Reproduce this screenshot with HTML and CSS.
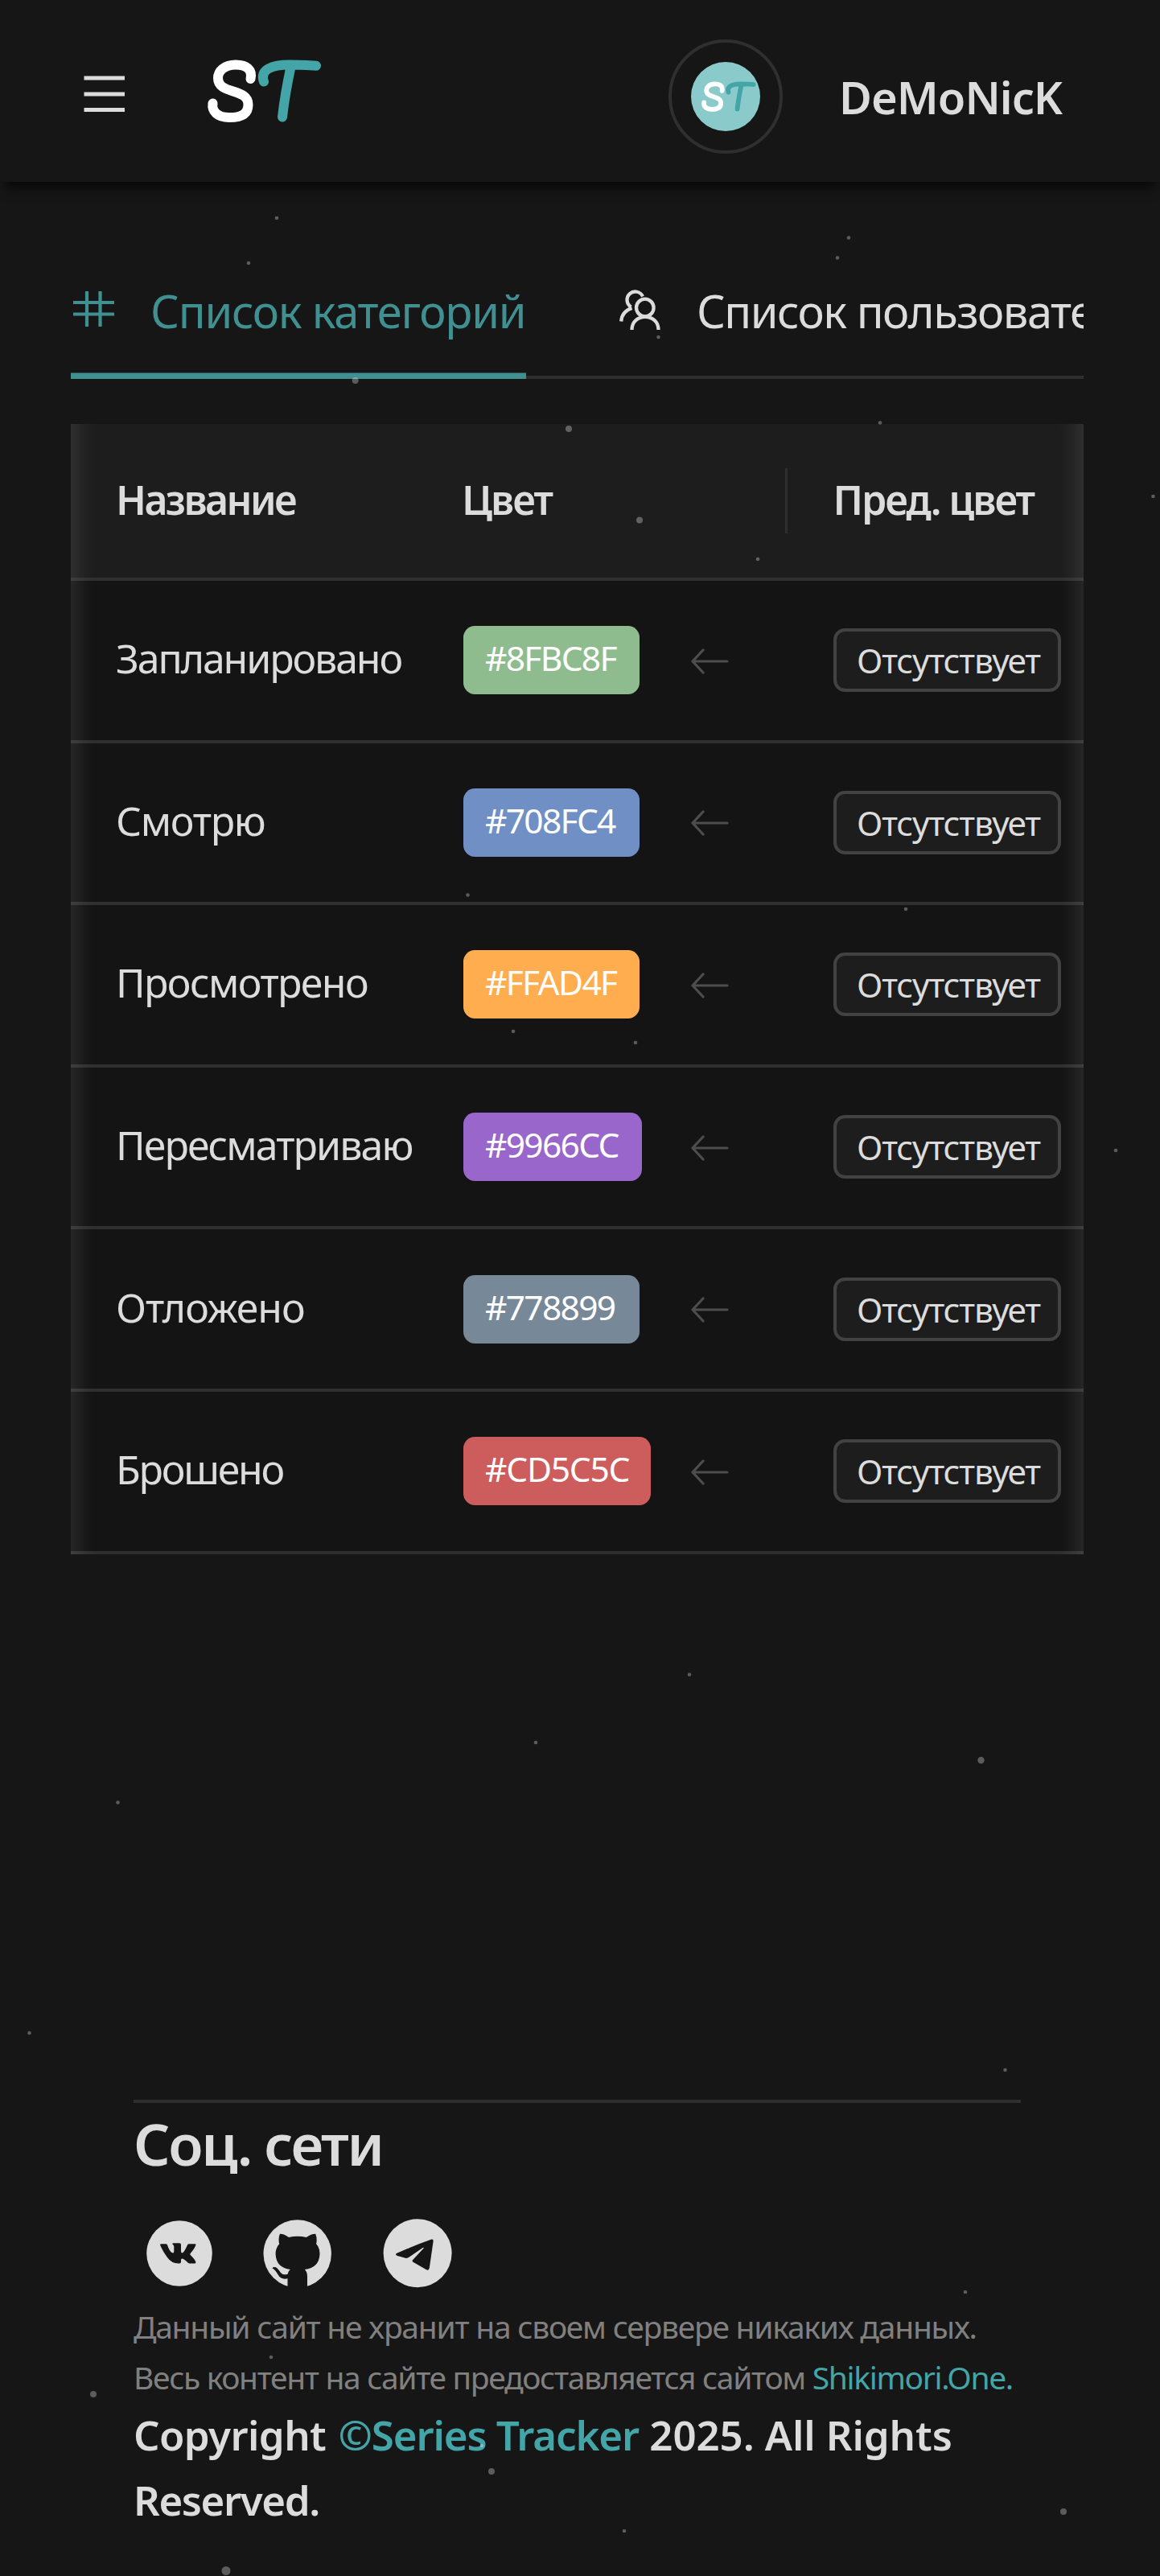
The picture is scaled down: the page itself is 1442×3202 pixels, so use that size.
FILE: index.html
```
<!DOCTYPE html>
<html lang="ru">
<head>
<meta charset="utf-8">
<title>Series Tracker</title>
<link rel="stylesheet" href="styles.css">
</head>
<body>
<svg class="defs" width="0" height="0" aria-hidden="true">
  <symbol id="logo" viewBox="256 72 146 84">
    <g fill="none" stroke-width="12" stroke-linecap="round" stroke-linejoin="round">
      <path stroke="#fff" d="M311.5 98C314 87 307 80.500 293 80.500C278 80.500 271 89 271 97C271 118 308.500 109 308.500 130C308.500 141 301 146 285 146C270 146 263 138 264.500 128.500"/>
      <path stroke="#43a5a7" d="M328 101.500C322 86 339 80.500 360 80.500C372 80.500 380 81 393 81.700M361.500 83Q354 118 351 145.500"/>
    </g>
  </symbol>
  <symbol id="arrow" viewBox="0 0 48 32">
    <path d="M46 16H3M16 2L3 16L16 30" fill="none" stroke="currentColor" stroke-width="3.200" stroke-linecap="round" stroke-linejoin="round"/>
  </symbol>
</svg>

<header class="header">
  <div class="brand">
    <svg class="burger" viewBox="0 0 52 46"><path d="M.5 3H51M.5 23H51M.5 42.500H51" stroke="#dcdcdc" stroke-width="5.200"/></svg>
    <svg class="logo"><use href="#logo"/></svg>
  </div>
  <div class="user">
    <div class="avatar"><div class="avatar-pic"><svg class="avatar-logo"><use href="#logo"/></svg></div></div>
    <span class="user-name">DeMoNicK</span>
  </div>
</header>

<main class="main">
  <nav class="tabs">
    <div class="tab tab-active">
      <svg class="tab-icon" viewBox="0 0 56 56"><path d="M3 18H54M3 32.500H54M20 4V48M36.500 4V48" stroke="currentColor" stroke-width="4.200"/></svg>
      <span>Список категорий</span>
    </div>
    <div class="tab tab-next">
      <svg class="tab-icon" viewBox="0 0 56 56" fill="none" stroke="currentColor" stroke-width="4.300">
        <circle cx="32.800" cy="24.500" r="10.800"/>
        <path d="M30 10.500A10.200 10.200 0 1 0 15.500 23.500M3.200 41.500Q4 29 16.500 25M16.500 52C16.500 30.500 49.500 30.500 49.500 52"/>
      </svg>
      <span>Список пользователей</span>
    </div>
  </nav>

  <section class="table">
    <div class="row head">
      <div class="cell">Название</div>
      <div class="cell split">Цвет</div>
      <div class="cell">Пред. цвет</div>
    </div>
    <div class="row">
      <div class="cell name">Запланировано</div>
      <div class="cell color"><span class="tag green">#8FBC8F</span><svg class="arrow"><use href="#arrow"/></svg></div>
      <div class="cell"><span class="none">Отсутствует</span></div>
    </div>
    <div class="row">
      <div class="cell name">Смотрю</div>
      <div class="cell color"><span class="tag blue">#708FC4</span><svg class="arrow"><use href="#arrow"/></svg></div>
      <div class="cell"><span class="none">Отсутствует</span></div>
    </div>
    <div class="row">
      <div class="cell name">Просмотрено</div>
      <div class="cell color"><span class="tag orange">#FFAD4F</span><svg class="arrow"><use href="#arrow"/></svg></div>
      <div class="cell"><span class="none">Отсутствует</span></div>
    </div>
    <div class="row">
      <div class="cell name">Пересматриваю</div>
      <div class="cell color"><span class="tag violet">#9966CC</span><svg class="arrow"><use href="#arrow"/></svg></div>
      <div class="cell"><span class="none">Отсутствует</span></div>
    </div>
    <div class="row">
      <div class="cell name">Отложено</div>
      <div class="cell color"><span class="tag slate">#778899</span><svg class="arrow"><use href="#arrow"/></svg></div>
      <div class="cell"><span class="none">Отсутствует</span></div>
    </div>
    <div class="row">
      <div class="cell name">Брошено</div>
      <div class="cell color"><span class="tag red">#CD5C5C</span><svg class="arrow"><use href="#arrow"/></svg></div>
      <div class="cell"><span class="none">Отсутствует</span></div>
    </div>
  </section>
</main>

<footer class="footer">
  <h2 class="social-title">Соц. сети</h2>
  <div class="social">
    <svg width="82" height="86" viewBox="0 -1.500 82 86"><circle cx="41" cy="41.500" r="40.800" fill="#dcdcdc"/><path fill="#161616" d="M17 30.800Q17 29.800 18.500 29.800H24Q25.500 29.800 26 31Q29.500 41 33 41Q34.300 41 34.300 38.800V33Q34.300 31.500 32.500 30.200Q31.800 28.800 33.500 28.800H41.200Q43 28.800 43 30.800V38.500Q43 41 44.500 41Q46.500 41 51 31Q51.500 29.800 53 29.800H60.500Q62 29.800 61.200 31.500Q60 35.500 54.700 41.500Q54 42.500 54.700 43.500Q60 48.500 61.200 52Q61.800 54 60 54H54Q52.500 54 51.500 53Q46.500 48 44.300 48Q43 48 43 49.500V52Q43 54 41 54Q31.500 54.500 26 46.500Q20 38.500 17 30.800Z"/></svg>
    <svg width="86" height="86" viewBox="0 0 86 86"><circle cx="42.700" cy="43.500" r="42.200" fill="#dcdcdc"/><path fill="#161616" d="M20.200 31.300Q18.500 25 20.900 18.700Q26 18.500 32 23Q42.700 20.500 53.800 23Q60 18.500 65.300 18.700Q67.500 25 66.100 31.300Q70.700 36 70.500 44Q69.500 61 51.900 63Q55 66 55 72V86H30.500V74.300Q22 76 18.500 69.300Q15 63 11.500 61.500Q12.500 59.500 15.600 60.300Q18.500 61.500 21.500 66.500Q24.500 70.500 30.500 68.700Q31 65 33.900 63Q16.500 61 15.600 44Q15.500 36 20.200 31.300Z"/></svg>
    <svg width="86" height="86" viewBox="0 0 86 86"><circle cx="43.100" cy="42.700" r="42.500" fill="#dcdcdc"/><path fill="#161616" d="M17.300 42.800Q38 33.500 60.500 25.600Q62.800 25 62.600 28L57.900 60.500Q57.300 64.800 54 63.200L37.500 53.700Q35.800 52.500 37.200 51L50.500 36.800Q51.500 35.300 49.500 36L32.800 47.600Q30 49.600 27 48.600L18 46Q14.500 44.500 17.300 42.800Z"/></svg>
  </div>
  <p class="note note-first">Данный сайт не хранит на своем сервере никаких данных.</p>
  <p class="note">Весь контент на сайте предоставляется сайтом <a class="link">Shikimori.One.</a></p>
  <p class="copy"><span class="copy-word">Copyright</span> <a class="link copy-brand">©Series Tracker</a> <span class="copy-year">2025. All Rights</span> <span class="copy-end">Reserved.</span></p>
</footer>

<svg class="particles" viewBox="0 0 1442 3202" fill="#fff" fill-opacity=".3">
  <circle cx="344" cy="271" r="2.300"/><circle cx="1055" cy="295.500" r="2.300"/><circle cx="309" cy="327" r="2.300"/><circle cx="1041" cy="320.500" r="2.300"/>
  <circle cx="818.500" cy="419" r="2.300"/><circle cx="1094" cy="525.500" r="2.300"/><circle cx="942" cy="695" r="2.300"/><circle cx="1433.500" cy="617" r="2.300"/>
  <circle cx="581.500" cy="1112.500" r="2.300"/><circle cx="638" cy="1282" r="2.300"/><circle cx="1126" cy="1130" r="2.300"/><circle cx="790" cy="1296" r="2.300"/>
  <circle cx="1387" cy="1430" r="2.300"/><circle cx="857" cy="2081.500" r="2.300"/><circle cx="666" cy="2166" r="2.300"/><circle cx="146.500" cy="2240.500" r="2.300"/>
  <circle cx="36.500" cy="2527" r="2.300"/><circle cx="1249.500" cy="2573" r="2.300"/><circle cx="1200" cy="2849" r="2.300"/><circle cx="337" cy="2930" r="2.300"/>
  <circle cx="599" cy="3040" r="2.300"/><circle cx="776" cy="3146" r="2.300"/>
  <circle cx="441.700" cy="473" r="4"/><circle cx="707" cy="533" r="4"/><circle cx="795" cy="646.500" r="4"/><circle cx="1219.500" cy="2188" r="4.200"/>
  <circle cx="1322" cy="3122" r="4"/><circle cx="611" cy="3072" r="4"/><circle cx="116" cy="2976" r="4"/><circle cx="281" cy="3195.500" r="5.500"/>
</svg>
</body>
</html>
```
FILE: styles.css
```
* { box-sizing: border-box; }

body {
  margin: 0;
  position: relative;
  height: 3202px;
  overflow: hidden;
  background: #161616;
  color: #dcdcdc;
  font-family: "Noto Sans", "Open Sans", sans-serif;
}

.defs { display: block; height: 0; }

/* header */
.header {
  display: flex;
  align-items: center;
  justify-content: space-between;
  height: 226px;
  padding: 14px 122px 0 104px;
  box-shadow: 0 14px 14px -7px rgba(0, 0, 0, .7);
}
.brand { display: flex; align-items: center; gap: 100px; }
.burger { width: 52px; height: 46px; margin-bottom: 6px; }
.logo { width: 146px; height: 84px; margin-bottom: 12px; }
.user { display: flex; align-items: center; gap: 70px; }
.avatar {
  display: flex;
  align-items: center;
  justify-content: center;
  width: 142px;
  height: 142px;
  border: 4px solid #2f2f2f;
  border-radius: 50%;
}
.avatar-pic {
  display: flex;
  align-items: center;
  justify-content: center;
  width: 86px;
  height: 86px;
  border-radius: 50%;
  background: #8acacb;
}
.avatar-logo { width: 70px; height: 41px; margin-left: 8px; }
.user-name {
  font-size: 56px;
  font-weight: 600;
  line-height: 80px;
  letter-spacing: -1px;
}

/* tabs */
.main { width: 1259px; margin: 76px 0 0 88px; }
.tabs {
  display: flex;
  gap: 115px;
  height: 168.500px;
  overflow: hidden;
  box-shadow: inset 0 -4px #2f2f2f;
}
.tab {
  display: flex;
  flex: none;
  align-items: center;
  gap: 43px;
  width: 566px;
  font-size: 56px;
  letter-spacing: -1.200px;
  white-space: nowrap;
}
.tab-active { color: #409091; box-shadow: inset 0 -7.5px #409091; }
.tab-next { gap: 41px; letter-spacing: -1.500px; }
.tab-icon { flex: none; width: 56px; height: 56px; }

/* table */
.table { position: relative; margin-top: 56.500px; background: #141414; }
.table::after {
  content: "";
  position: absolute;
  inset: 0;
  box-shadow: inset 36px 0 29px -29px rgba(253, 253, 253, .12), inset -36px 0 29px -29px rgba(253, 253, 253, .12);
}
.row {
  display: grid;
  grid-template-columns: 486px 405px 1fr;
  height: 201.600px;
  border-bottom: 4px solid #2f2f2f;
  font-size: 50px;
}
.head { height: 195px; background: #1d1d1d; font-weight: 600; letter-spacing: -2px; }
.cell { display: flex; align-items: center; padding-left: 56.500px; }
.cell:first-child { padding-left: 56px; }
.head .cell { padding-bottom: 4px; }
.head .cell:first-child { letter-spacing: -2.600px; }
.head .split {
  padding-left: 0;
  background: linear-gradient(#2f2f2f, #2f2f2f) right center / 3.5px 81px no-repeat;
}
.name { padding-bottom: 5px; letter-spacing: -1.900px; }
.row:nth-child(2) .name { letter-spacing: -2.100px; }
.row:nth-child(3) .name { letter-spacing: -1.300px; }
.row:nth-child(4) .name { letter-spacing: -1.600px; }
.row:nth-child(6) .name { letter-spacing: -1px; }
.row:nth-child(7) .name { letter-spacing: -2.200px; }
.row .color { display: grid; grid-template-columns: 282px 48px; padding-left: 2px; }
.tag {
  justify-self: start;
  width: 219px;
  height: 85px;
  padding-left: 27px;
  border-radius: 14.400px;
  color: #fff;
  font-size: 42.500px;
  line-height: 80px;
  letter-spacing: -1.700px;
}
.green { background: #8fbc8f; }
.blue { background: #708fc4; }
.orange { background: #ffad4f; }
.violet { width: 222px; background: #9966cc; }
.slate { background: #778899; }
.red { width: 233px; background: #cd5c5c; letter-spacing: -1.200px; }
.arrow { width: 48px; height: 32px; margin-top: 2px; color: #4d4d4d; }
.none {
  width: 283px;
  height: 79px;
  padding-left: 25.500px;
  border: 4px solid #424242;
  border-radius: 14.400px;
  background: #1d1d1d;
  font-size: 42.500px;
  line-height: 72px;
  letter-spacing: -1.200px;
}

/* footer */
.footer { width: 1103px; margin: 678.500px 0 0 166px; border-top: 4px solid #2f2f2f; }
.social-title {
  margin: 0;
  font-size: 71px;
  font-weight: 600;
  line-height: 101px;
  letter-spacing: -2.300px;
}
.social { display: flex; gap: 63px; height: 86px; margin: 43px 0 0 15.500px; }
.note {
  margin: 0;
  color: #808080;
  font-size: 39px;
  line-height: 63px;
  letter-spacing: -1.350px;
  white-space: nowrap;
}
.note-first { margin-top: 16px; letter-spacing: -1.250px; }
.link { color: #43a5a7; }
.copy { margin: 0; font-size: 51px; font-weight: 600; line-height: 81px; }
.copy-word { margin-right: 2px; letter-spacing: -.600px; }
.copy-brand { letter-spacing: -1.100px; }
.copy-year { letter-spacing: -.100px; }
.copy-end { letter-spacing: -1.400px; }

.particles { position: absolute; left: 0; top: 0; width: 1442px; height: 3202px; pointer-events: none; }
```
